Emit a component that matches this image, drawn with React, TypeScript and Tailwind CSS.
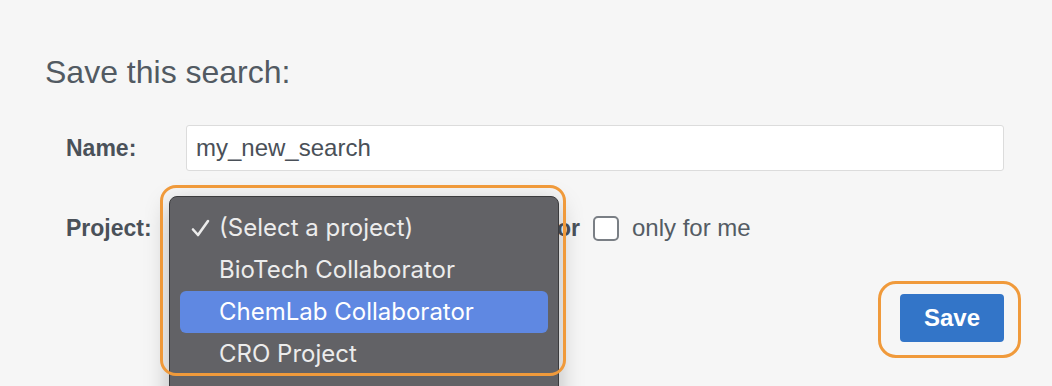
const projects = ['(Select a project)', 'BioTech Collaborator', 'ChemLab Collaborator', 'CRO Project'];

function ProjectMenu() {
  return (
    <>
      {/* highlight ring around the open menu */}
      <div className="pointer-events-none absolute left-[-26px] top-[-20px] z-20 h-[191px] w-[406px] rounded-[16px] border-[3px] border-[#f09a3b]" />
      <div className="absolute left-[-17px] top-[-9px] z-10 w-[390px] rounded-[8px] border border-[#3b3b3d] bg-[#626266] px-[10px] pt-[10px] pb-[20px] shadow-[0_8px_24px_rgba(0,0,0,0.25)] font-['Inter',sans-serif]">
        {projects.map((p, i) => (
          <div
            key={p}
            className={
              i === 2
                ? 'flex h-[42px] items-center rounded-[6px] bg-[#5f88e2] text-white'
                : 'flex h-[42px] items-center rounded-[6px] text-[#ececec]'
            }
          >
            <span className="flex w-[39px] justify-center pl-[1px]">
              {i === 0 && (
                <svg width="19" height="18" viewBox="0 0 19 18" fill="none">
                  <path d="M2 10.5 L7 16 L17 2" stroke="#ececec" strokeWidth="2.6" strokeLinecap="round" strokeLinejoin="round" />
                </svg>
              )}
            </span>
            <span className="text-[24px] leading-none">{p}</span>
          </div>
        ))}
        <div className="h-[42px]" />
      </div>
    </>
  );
}

export default function App() {
  return (
    <div className="h-screen overflow-hidden bg-[#f6f6f6] font-['Liberation_Sans',Arial,sans-serif] text-[#4d555d]">
      <div className="pl-[45px] pr-[48px] pt-[56px]">
        <h2 className="text-[32px] leading-[32px] text-[#525a62]">Save this search:</h2>

        <div className="mt-[37px] flex items-center">
          <label className="w-[141px] pl-[21px] text-[23px] font-bold text-[#4a5159]">Name:</label>
          <div className="flex h-[46px] flex-1 items-center rounded-[3px] border border-[#dcdcdc] bg-white px-[9px] text-[24px] text-[#4a5058]">
            my_new_search
          </div>
        </div>

        <div className="mt-[34px] flex h-[46px] items-center">
          <label className="w-[141px] pl-[21px] text-[23px] font-bold text-[#4a5159]">Project:</label>
          <div className="relative h-[46px] w-[361px]">
            <ProjectMenu />
          </div>
          <span className="ml-[10px] text-[23px] font-bold text-[#4a5159]">or</span>
          <span className="ml-[13px] h-[25px] w-[26px] rounded-[5px] border-2 border-[#7a7f85] bg-white" />
          <span className="ml-[13px] text-[24px] text-[#545c64]">only for me</span>
        </div>

        <div className="mt-[43px] flex justify-end">
          <div className="relative">
            <div className="pointer-events-none absolute bottom-[-16px] left-[-22px] right-[-17px] top-[-13px] rounded-[18px] border-[3px] border-[#f09a3b]" />
            <button className="h-[48px] w-[104px] rounded-[4px] bg-[#3375c8] text-[24px] font-bold text-white">
              Save
            </button>
          </div>
        </div>
      </div>
    </div>
  );
}
